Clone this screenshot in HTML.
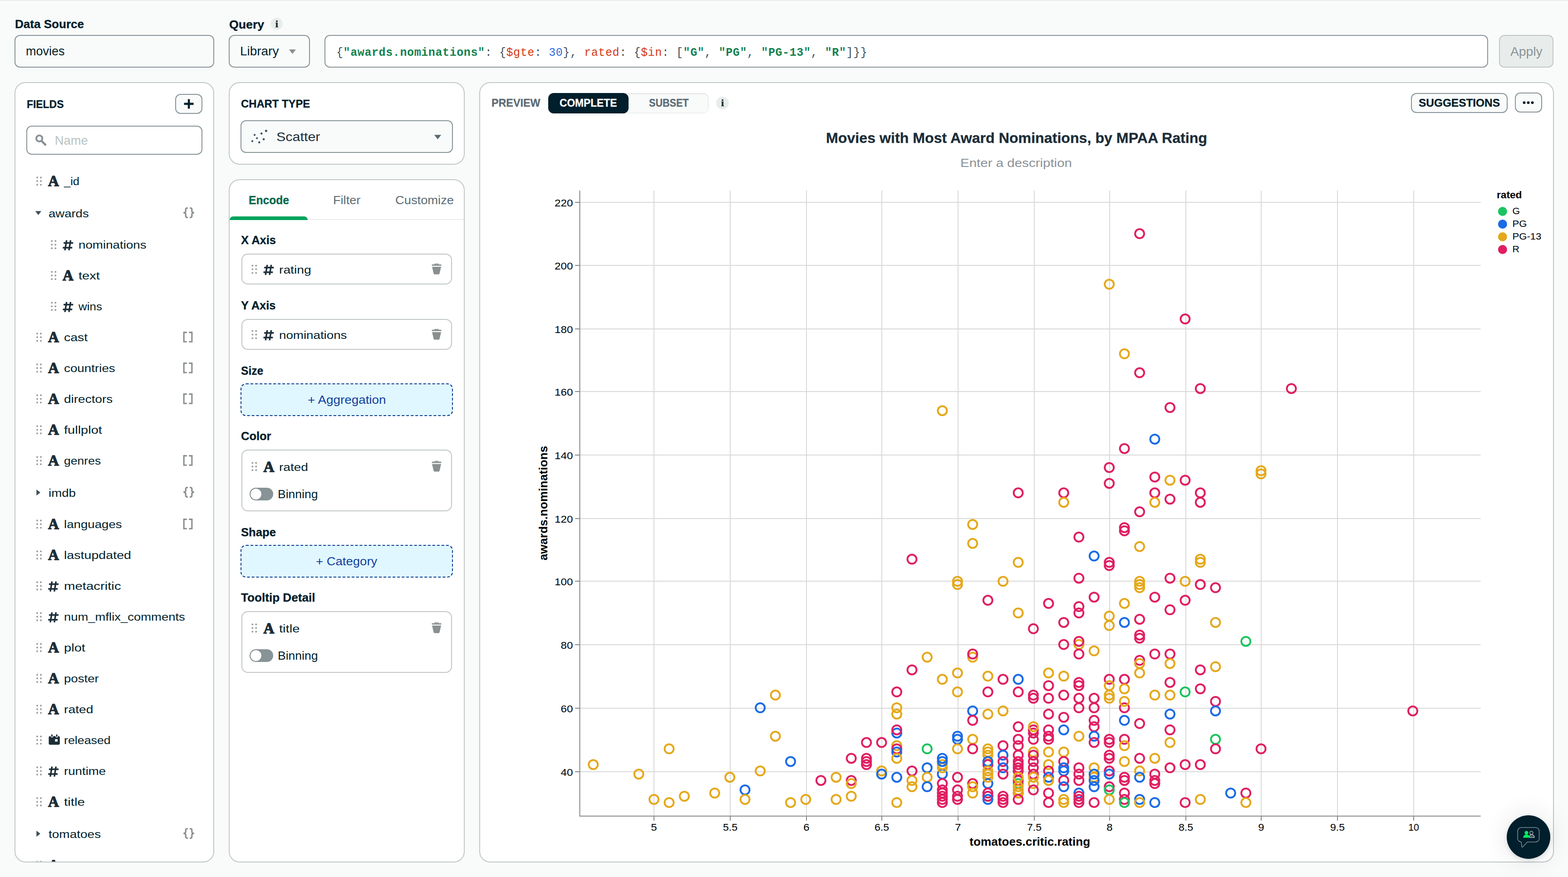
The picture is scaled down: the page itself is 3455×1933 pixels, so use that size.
<!DOCTYPE html>
<html lang="en"><head><meta charset="utf-8"><title>Movies with Most Award Nominations, by MPAA Rating</title>
<style>
html,body{margin:0;padding:0}
body{width:3455px;height:1933px;position:relative;overflow:hidden;background:#F9FBFA;font-family:"Liberation Sans",sans-serif}
.b{position:absolute;box-sizing:border-box}
.t{position:absolute;white-space:nowrap;transform-origin:0 0}
svg.ov{position:absolute;left:0;top:0;pointer-events:none}
</style></head><body>
<div class="b" style="left:0;top:0;width:3455px;height:7px;background:linear-gradient(#E8E9E9 0,#EEEFEF 1.5px,#FCFDFD 3px,#FCFDFC 5px,#F9FBFA 7px)"></div>
<div class="t" style="left:32.6px;top:41.4px;font:700 25.5px/25.5px 'Liberation Sans',sans-serif;color:#001E2B;transform:scaleX(1.0214);-webkit-text-stroke:0.35px;">Data Source</div>
<div class="b " style="left:32px;top:77px;width:440px;height:72px;background:#F9FBFA;border:2px solid #889397;border-radius:12px;box-sizing:border-box;"></div>
<div class="t" style="left:57.0px;top:99.4px;font:400 27.3px/27.3px 'Liberation Sans',sans-serif;color:#001E2B;transform:scaleX(0.9876);">movies</div>
<div class="t" style="left:504.7px;top:41.8px;font:700 25.5px/25.5px 'Liberation Sans',sans-serif;color:#001E2B;transform:scaleX(1.0475);-webkit-text-stroke:0.35px;">Query</div>
<div class="b " style="left:596.3px;top:39.2px;width:27px;height:27px;background:#E8EDEB;border-radius:14px;"></div>
<div class="b " style="left:504px;top:77px;width:179px;height:72px;background:#F9FBFA;border:2px solid #889397;border-radius:12px;box-sizing:border-box;"></div>
<div class="t" style="left:528.9px;top:99.2px;font:400 27.3px/27.3px 'Liberation Sans',sans-serif;color:#001E2B;transform:scaleX(1.0234);">Library</div>
<div class="b " style="left:715px;top:77px;width:2564px;height:72px;background:#fff;border:2px solid #889397;border-radius:12px;box-sizing:border-box;"></div>
<div class="t" style="left:741px;top:103.7px;font:400 25px/25px 'Liberation Mono',monospace;letter-spacing:0.6px;white-space:pre;"><span style="color:#3D4F58;font-weight:400">{</span><span style="color:#12824D;font-weight:700">"awards.nominations"</span><span style="color:#3D4F58;font-weight:400">: {</span><span style="color:#D83713;font-weight:400">$gte</span><span style="color:#3D4F58;font-weight:400">: </span><span style="color:#2D6CDC;font-weight:400">30</span><span style="color:#3D4F58;font-weight:400">}, </span><span style="color:#D83713;font-weight:400">rated</span><span style="color:#3D4F58;font-weight:400">: {</span><span style="color:#D83713;font-weight:400">$in</span><span style="color:#3D4F58;font-weight:400">: [</span><span style="color:#12824D;font-weight:700">"G"</span><span style="color:#3D4F58;font-weight:400">, </span><span style="color:#12824D;font-weight:700">"PG"</span><span style="color:#3D4F58;font-weight:400">, </span><span style="color:#12824D;font-weight:700">"PG-13"</span><span style="color:#3D4F58;font-weight:400">, </span><span style="color:#12824D;font-weight:700">"R"</span><span style="color:#3D4F58;font-weight:400">]}}</span></div>
<div class="b " style="left:3303px;top:77px;width:120px;height:72px;background:#E8EDEB;border:2px solid #C1C7C6;border-radius:12px;box-sizing:border-box;"></div>
<div class="t" style="left:3328.3px;top:100.1px;font:400 27.3px/27.3px 'Liberation Sans',sans-serif;color:#889397;transform:scaleX(1.0353);">Apply</div>
<div class="b " style="left:32px;top:181px;width:440px;height:1720px;background:#fff;border:2px solid #C1C7C6;border-radius:24px;box-sizing:border-box;"></div>
<div class="t" style="left:59.0px;top:218.8px;font:700 23px/23px 'Liberation Sans',sans-serif;color:#001E2B;transform:scaleX(0.9953);-webkit-text-stroke:0.35px;">FIELDS</div>
<div class="b " style="left:386px;top:207px;width:60px;height:44px;background:#F9FBFA;border:2px solid #889397;border-radius:12px;box-sizing:border-box;"></div>
<div class="b " style="left:58px;top:277px;width:388px;height:64px;background:#fff;border:2px solid #889397;border-radius:12px;box-sizing:border-box;"></div>
<div class="t" style="left:120.8px;top:295.8px;font:400 27.3px/27.3px 'Liberation Sans',sans-serif;color:#B8C4C2;">Name</div>
<div class="t" style="left:140.9px;top:388.0px;font:400 24.6px/24.6px 'Liberation Sans',sans-serif;color:#001E2B;transform:scaleX(1.0357);">_id</div>
<div class="t" style="left:106.8px;top:458.8px;font:400 24.6px/24.6px 'Liberation Sans',sans-serif;color:#001E2B;transform:scaleX(1.1185);">awards</div>
<div class="t" style="left:173.1px;top:528.0px;font:400 24.6px/24.6px 'Liberation Sans',sans-serif;color:#001E2B;transform:scaleX(1.1285);">nominations</div>
<div class="t" style="left:173.1px;top:596.0px;font:400 24.6px/24.6px 'Liberation Sans',sans-serif;color:#001E2B;transform:scaleX(1.1828);">text</div>
<div class="t" style="left:173.1px;top:664.0px;font:400 24.6px/24.6px 'Liberation Sans',sans-serif;color:#001E2B;transform:scaleX(1.0546);">wins</div>
<div class="t" style="left:140.9px;top:732.0px;font:400 24.6px/24.6px 'Liberation Sans',sans-serif;color:#001E2B;transform:scaleX(1.1592);">cast</div>
<div class="t" style="left:140.9px;top:800.0px;font:400 24.6px/24.6px 'Liberation Sans',sans-serif;color:#001E2B;transform:scaleX(1.1300);">countries</div>
<div class="t" style="left:140.9px;top:868.0px;font:400 24.6px/24.6px 'Liberation Sans',sans-serif;color:#001E2B;transform:scaleX(1.1385);">directors</div>
<div class="t" style="left:140.9px;top:936.0px;font:400 24.6px/24.6px 'Liberation Sans',sans-serif;color:#001E2B;transform:scaleX(1.1798);">fullplot</div>
<div class="t" style="left:140.9px;top:1004.0px;font:400 24.6px/24.6px 'Liberation Sans',sans-serif;color:#001E2B;transform:scaleX(1.0795);">genres</div>
<div class="t" style="left:106.8px;top:1074.8px;font:400 24.6px/24.6px 'Liberation Sans',sans-serif;color:#001E2B;transform:scaleX(1.1252);">imdb</div>
<div class="t" style="left:140.9px;top:1144.0px;font:400 24.6px/24.6px 'Liberation Sans',sans-serif;color:#001E2B;transform:scaleX(1.1247);">languages</div>
<div class="t" style="left:140.9px;top:1212.0px;font:400 24.6px/24.6px 'Liberation Sans',sans-serif;color:#001E2B;transform:scaleX(1.1635);">lastupdated</div>
<div class="t" style="left:140.9px;top:1280.0px;font:400 24.6px/24.6px 'Liberation Sans',sans-serif;color:#001E2B;transform:scaleX(1.1934);">metacritic</div>
<div class="t" style="left:140.9px;top:1348.0px;font:400 24.6px/24.6px 'Liberation Sans',sans-serif;color:#001E2B;transform:scaleX(1.1152);">num_mflix_comments</div>
<div class="t" style="left:140.9px;top:1416.0px;font:400 24.6px/24.6px 'Liberation Sans',sans-serif;color:#001E2B;transform:scaleX(1.1824);">plot</div>
<div class="t" style="left:140.9px;top:1484.0px;font:400 24.6px/24.6px 'Liberation Sans',sans-serif;color:#001E2B;transform:scaleX(1.1233);">poster</div>
<div class="t" style="left:140.9px;top:1552.0px;font:400 24.6px/24.6px 'Liberation Sans',sans-serif;color:#001E2B;transform:scaleX(1.1503);">rated</div>
<div class="t" style="left:140.9px;top:1620.0px;font:400 24.6px/24.6px 'Liberation Sans',sans-serif;color:#001E2B;transform:scaleX(1.0883);">released</div>
<div class="t" style="left:140.9px;top:1688.0px;font:400 24.6px/24.6px 'Liberation Sans',sans-serif;color:#001E2B;transform:scaleX(1.1240);">runtime</div>
<div class="t" style="left:140.9px;top:1756.0px;font:400 24.6px/24.6px 'Liberation Sans',sans-serif;color:#001E2B;transform:scaleX(1.2016);">title</div>
<div class="t" style="left:106.8px;top:1826.8px;font:400 24.6px/24.6px 'Liberation Sans',sans-serif;color:#001E2B;transform:scaleX(1.1385);">tomatoes</div>
<div class="b " style="left:504px;top:181px;width:520px;height:182px;background:#fff;border:2px solid #C1C7C6;border-radius:24px;box-sizing:border-box;"></div>
<div class="t" style="left:531.0px;top:217.5px;font:700 23px/23px 'Liberation Sans',sans-serif;color:#001E2B;transform:scaleX(1.0357);-webkit-text-stroke:0.35px;">CHART TYPE</div>
<div class="b " style="left:530px;top:265px;width:468px;height:72px;background:#F9FBFA;border:2px solid #889397;border-radius:12px;box-sizing:border-box;"></div>
<div class="t" style="left:608.9px;top:287.9px;font:400 27.3px/27.3px 'Liberation Sans',sans-serif;color:#1C2D38;transform:scaleX(1.1158);">Scatter</div>
<div class="b " style="left:504px;top:395px;width:520px;height:1506px;background:#fff;border:2px solid #C1C7C6;border-radius:24px;box-sizing:border-box;overflow:hidden;"><div class="b" style="left:0;top:86px;width:516px;height:2px;background:#E8EDEB"></div><div class="b" style="left:0;top:80px;width:172px;height:8px;background:#00A35C;border-radius:8px 8px 0 0"></div></div>
<div class="t" style="left:547.5px;top:429.4px;font:700 25.8px/25.8px 'Liberation Sans',sans-serif;color:#00684A;transform:scaleX(0.9551);-webkit-text-stroke:0.35px;">Encode</div>
<div class="t" style="left:734.2px;top:429.4px;font:400 25.8px/25.8px 'Liberation Sans',sans-serif;color:#5C6C75;transform:scaleX(1.0517);">Filter</div>
<div class="t" style="left:871.1px;top:429.4px;font:400 25.8px/25.8px 'Liberation Sans',sans-serif;color:#5C6C75;transform:scaleX(1.0585);">Customize</div>
<div class="t" style="left:530.6px;top:517.2px;font:700 25.8px/25.8px 'Liberation Sans',sans-serif;color:#001E2B;transform:scaleX(0.9882);-webkit-text-stroke:0.35px;">X Axis</div>
<div class="b " style="left:532px;top:559px;width:464px;height:68px;background:#fff;border:2px solid #C1C7C6;border-radius:14px;box-sizing:border-box;"></div>
<div class="t" style="left:615.2px;top:582.8px;font:400 24.6px/24.6px 'Liberation Sans',sans-serif;color:#001E2B;transform:scaleX(1.1473);">rating</div>
<div class="t" style="left:530.6px;top:661.2px;font:700 25.8px/25.8px 'Liberation Sans',sans-serif;color:#001E2B;transform:scaleX(0.9877);-webkit-text-stroke:0.35px;">Y Axis</div>
<div class="b " style="left:532px;top:703px;width:464px;height:68px;background:#fff;border:2px solid #C1C7C6;border-radius:14px;box-sizing:border-box;"></div>
<div class="t" style="left:615.2px;top:726.8px;font:400 24.6px/24.6px 'Liberation Sans',sans-serif;color:#001E2B;transform:scaleX(1.1270);">nominations</div>
<div class="t" style="left:530.6px;top:805.0px;font:700 25.8px/25.8px 'Liberation Sans',sans-serif;color:#001E2B;transform:scaleX(0.9530);-webkit-text-stroke:0.35px;">Size</div>
<div class="b " style="left:530px;top:845px;width:468px;height:72px;background:#E1F7FF;border:2px solid #083C90;border-radius:12px;box-sizing:border-box;border-style:dashed;"></div>
<div class="t" style="left:677.8px;top:869.0px;font:400 25.5px/25.5px 'Liberation Sans',sans-serif;color:#10419C;transform:scaleX(1.0911);">+ Aggregation</div>
<div class="t" style="left:530.6px;top:949.2px;font:700 25.8px/25.8px 'Liberation Sans',sans-serif;color:#001E2B;transform:scaleX(0.9872);-webkit-text-stroke:0.35px;">Color</div>
<div class="b " style="left:532px;top:991px;width:464px;height:136px;background:#fff;border:2px solid #C1C7C6;border-radius:14px;box-sizing:border-box;"></div>
<div class="t" style="left:615.2px;top:1017.6px;font:400 24.6px/24.6px 'Liberation Sans',sans-serif;color:#001E2B;transform:scaleX(1.1378);">rated</div>
<div class="b " style="left:550px;top:1075px;width:52px;height:28px;background:#889397;border-radius:14px;"></div>
<div class="b " style="left:552px;top:1077px;width:24px;height:24px;background:#fff;border-radius:12px;box-shadow:0 0 2px rgba(0,30,43,.3);"></div>
<div class="t" style="left:611.8px;top:1076.9px;font:400 25.5px/25.5px 'Liberation Sans',sans-serif;color:#001E2B;transform:scaleX(1.0391);">Binning</div>
<div class="t" style="left:530.6px;top:1161.2px;font:700 25.8px/25.8px 'Liberation Sans',sans-serif;color:#001E2B;transform:scaleX(0.9945);-webkit-text-stroke:0.35px;">Shape</div>
<div class="b " style="left:530px;top:1201px;width:468px;height:72px;background:#E1F7FF;border:2px solid #083C90;border-radius:12px;box-sizing:border-box;border-style:dashed;"></div>
<div class="t" style="left:696.4px;top:1225.0px;font:400 25.5px/25.5px 'Liberation Sans',sans-serif;color:#10419C;transform:scaleX(1.0785);">+ Category</div>
<div class="t" style="left:530.6px;top:1304.9px;font:700 25.8px/25.8px 'Liberation Sans',sans-serif;color:#001E2B;transform:scaleX(1.0125);-webkit-text-stroke:0.35px;">Tooltip Detail</div>
<div class="b " style="left:532px;top:1347px;width:464px;height:136px;background:#fff;border:2px solid #C1C7C6;border-radius:14px;box-sizing:border-box;"></div>
<div class="t" style="left:615.2px;top:1373.6px;font:400 24.6px/24.6px 'Liberation Sans',sans-serif;color:#001E2B;transform:scaleX(1.1886);">title</div>
<div class="b " style="left:550px;top:1431px;width:52px;height:28px;background:#889397;border-radius:14px;"></div>
<div class="b " style="left:552px;top:1433px;width:24px;height:24px;background:#fff;border-radius:12px;box-shadow:0 0 2px rgba(0,30,43,.3);"></div>
<div class="t" style="left:611.8px;top:1433.0px;font:400 25.5px/25.5px 'Liberation Sans',sans-serif;color:#001E2B;transform:scaleX(1.0391);">Binning</div>
<div class="b " style="left:1056px;top:181px;width:2368px;height:1720px;background:#fff;border:2px solid #C1C7C6;border-radius:24px;box-sizing:border-box;"></div>
<div class="t" style="left:1083.3px;top:215.9px;font:700 23px/23px 'Liberation Sans',sans-serif;color:#5C6C75;transform:scaleX(1.0125);-webkit-text-stroke:0.35px;">PREVIEW</div>
<div class="b " style="left:1208px;top:205px;width:354px;height:45px;background:#F9FBFA;border:1px solid #E8EDEB;border-radius:12px;box-sizing:border-box;box-shadow:inset 0 1px 3px rgba(0,30,43,.12);"></div>
<div class="b " style="left:1208px;top:205px;width:177px;height:44.5px;background:#001E2B;border-radius:12px;"></div>
<div class="t" style="left:1232.8px;top:215.9px;font:700 23px/23px 'Liberation Sans',sans-serif;color:#fff;transform:scaleX(0.9884);-webkit-text-stroke:0.35px;">COMPLETE</div>
<div class="t" style="left:1430.2px;top:215.9px;font:700 23px/23px 'Liberation Sans',sans-serif;color:#5C6C75;transform:scaleX(0.9379);-webkit-text-stroke:0.35px;">SUBSET</div>
<div class="b " style="left:1578px;top:213px;width:28px;height:28px;background:#E8EDEB;border-radius:14px;"></div>
<div class="b " style="left:3109px;top:205px;width:213px;height:44px;background:#F9FBFA;border:2px solid #889397;border-radius:12px;box-sizing:border-box;"></div>
<div class="t" style="left:3125.7px;top:215.5px;font:700 23px/23px 'Liberation Sans',sans-serif;color:#001E2B;transform:scaleX(1.0611);-webkit-text-stroke:0.35px;">SUGGESTIONS</div>
<div class="b " style="left:3338px;top:204px;width:60px;height:44px;background:#F9FBFA;border:2px solid #889397;border-radius:12px;box-sizing:border-box;"></div>
<div class="t" style="left:1820.0px;top:289.1px;font:700 31.5px/31.5px 'Liberation Sans',sans-serif;color:#1C2D38;transform:scaleX(1.0212);-webkit-text-stroke:0.35px;">Movies with Most Award Nominations, by MPAA Rating</div>
<div class="t" style="left:2116.3px;top:346.3px;font:400 26px/26px 'Liberation Sans',sans-serif;color:#8A9196;transform:scaleX(1.1347);">Enter a description</div>
<div class="b " style="left:3320px;top:1797px;width:96px;height:96px;background:#001E2B;border-radius:48px;box-shadow:0 0 50px 10px rgba(0,30,43,.07),0 3px 10px rgba(0,30,43,.14);"></div>
<svg class="ov" width="3455" height="1933" viewBox="0 0 3455 1933">
<defs><clipPath id="fclip"><rect x="34" y="183" width="436" height="1716"/></clipPath></defs>
<text x="609.8" y="60.2" text-anchor="middle" font-family="Liberation Serif,serif" font-weight="700" font-size="22" fill="#1C2D38" stroke="#1C2D38" stroke-width="0.7">i</text>
<path d="M636.8 108.9H652.0L644.4 119.1Z" fill="#8A9090"/>
<path d="M405.6 228.9h21M416.1 218.4v21" stroke="#001E2B" stroke-width="4.6" fill="none"/>
<circle cx="86.6" cy="305.2" r="6.6" fill="none" stroke="#889397" stroke-width="4"/><path d="M91.6 310.6L100 319" stroke="#889397" stroke-width="4.6" stroke-linecap="round"/>
<circle cx="82.0" cy="391.2" r="1.95" fill="#989D9C"/>
<circle cx="82.0" cy="399.2" r="1.95" fill="#989D9C"/>
<circle cx="82.0" cy="407.2" r="1.95" fill="#989D9C"/>
<circle cx="90.0" cy="391.2" r="1.95" fill="#989D9C"/>
<circle cx="90.0" cy="399.2" r="1.95" fill="#989D9C"/>
<circle cx="90.0" cy="407.2" r="1.95" fill="#989D9C"/>
<text x="117.8" y="410.3" text-anchor="middle" font-family="Liberation Serif,serif" font-weight="700" font-size="33" fill="#1C2D38" stroke="#1C2D38" stroke-width="1.5" stroke-linejoin="miter">A</text>
<path d="M77.8 465.3H91.0L84.4 473.9Z" fill="#3D4F58"/>
<g fill="none" stroke="#8A9090" stroke-width="3.2" stroke-linejoin="round" stroke-linecap="butt"><path d="M413.9 458.5h-1.5q-3.2 0 -3.2 3.2v3.4q0 3.4 -3.8 3.8q3.8 0.4 3.8 3.8v3.4q0 3.2 3.2 3.2h1.5"/><path d="M418.1 458.5h1.5q3.2 0 3.2 3.2v3.4q0 3.4 3.8 3.8q-3.8 0.4 -3.8 3.8v3.4q0 3.2 -3.2 3.2h-1.5"/></g>
<circle cx="114.2" cy="531.2" r="1.95" fill="#989D9C"/>
<circle cx="114.2" cy="539.2" r="1.95" fill="#989D9C"/>
<circle cx="114.2" cy="547.2" r="1.95" fill="#989D9C"/>
<circle cx="122.2" cy="531.2" r="1.95" fill="#989D9C"/>
<circle cx="122.2" cy="539.2" r="1.95" fill="#989D9C"/>
<circle cx="122.2" cy="547.2" r="1.95" fill="#989D9C"/>
<g stroke="#1C2D38" stroke-width="3.5" fill="none" stroke-linecap="butt"><path d="M146.8 529.6L143.0 551.8M155.6 529.6L151.9 551.8"/><path d="M140.1 535.5H161.3M138.4 545.9H159.2"/></g>
<circle cx="114.2" cy="599.2" r="1.95" fill="#989D9C"/>
<circle cx="114.2" cy="607.2" r="1.95" fill="#989D9C"/>
<circle cx="114.2" cy="615.2" r="1.95" fill="#989D9C"/>
<circle cx="122.2" cy="599.2" r="1.95" fill="#989D9C"/>
<circle cx="122.2" cy="607.2" r="1.95" fill="#989D9C"/>
<circle cx="122.2" cy="615.2" r="1.95" fill="#989D9C"/>
<text x="150.0" y="618.3" text-anchor="middle" font-family="Liberation Serif,serif" font-weight="700" font-size="33" fill="#1C2D38" stroke="#1C2D38" stroke-width="1.5" stroke-linejoin="miter">A</text>
<circle cx="114.2" cy="667.2" r="1.95" fill="#989D9C"/>
<circle cx="114.2" cy="675.2" r="1.95" fill="#989D9C"/>
<circle cx="114.2" cy="683.2" r="1.95" fill="#989D9C"/>
<circle cx="122.2" cy="667.2" r="1.95" fill="#989D9C"/>
<circle cx="122.2" cy="675.2" r="1.95" fill="#989D9C"/>
<circle cx="122.2" cy="683.2" r="1.95" fill="#989D9C"/>
<g stroke="#1C2D38" stroke-width="3.5" fill="none" stroke-linecap="butt"><path d="M146.8 665.6L143.0 687.8M155.6 665.6L151.9 687.8"/><path d="M140.1 671.5H161.3M138.4 681.9H159.2"/></g>
<circle cx="82.0" cy="735.2" r="1.95" fill="#989D9C"/>
<circle cx="82.0" cy="743.2" r="1.95" fill="#989D9C"/>
<circle cx="82.0" cy="751.2" r="1.95" fill="#989D9C"/>
<circle cx="90.0" cy="735.2" r="1.95" fill="#989D9C"/>
<circle cx="90.0" cy="743.2" r="1.95" fill="#989D9C"/>
<circle cx="90.0" cy="751.2" r="1.95" fill="#989D9C"/>
<text x="117.8" y="754.3" text-anchor="middle" font-family="Liberation Serif,serif" font-weight="700" font-size="33" fill="#1C2D38" stroke="#1C2D38" stroke-width="1.5" stroke-linejoin="miter">A</text>
<g fill="none" stroke="#8A9090" stroke-width="3.1" stroke-linejoin="miter"><path d="M411.8 732.6h-6.65v20.7h6.65"/><path d="M416.2 732.6h6.65v20.7h-6.65"/></g>
<circle cx="82.0" cy="803.2" r="1.95" fill="#989D9C"/>
<circle cx="82.0" cy="811.2" r="1.95" fill="#989D9C"/>
<circle cx="82.0" cy="819.2" r="1.95" fill="#989D9C"/>
<circle cx="90.0" cy="803.2" r="1.95" fill="#989D9C"/>
<circle cx="90.0" cy="811.2" r="1.95" fill="#989D9C"/>
<circle cx="90.0" cy="819.2" r="1.95" fill="#989D9C"/>
<text x="117.8" y="822.3" text-anchor="middle" font-family="Liberation Serif,serif" font-weight="700" font-size="33" fill="#1C2D38" stroke="#1C2D38" stroke-width="1.5" stroke-linejoin="miter">A</text>
<g fill="none" stroke="#8A9090" stroke-width="3.1" stroke-linejoin="miter"><path d="M411.8 800.6h-6.65v20.7h6.65"/><path d="M416.2 800.6h6.65v20.7h-6.65"/></g>
<circle cx="82.0" cy="871.2" r="1.95" fill="#989D9C"/>
<circle cx="82.0" cy="879.2" r="1.95" fill="#989D9C"/>
<circle cx="82.0" cy="887.2" r="1.95" fill="#989D9C"/>
<circle cx="90.0" cy="871.2" r="1.95" fill="#989D9C"/>
<circle cx="90.0" cy="879.2" r="1.95" fill="#989D9C"/>
<circle cx="90.0" cy="887.2" r="1.95" fill="#989D9C"/>
<text x="117.8" y="890.3" text-anchor="middle" font-family="Liberation Serif,serif" font-weight="700" font-size="33" fill="#1C2D38" stroke="#1C2D38" stroke-width="1.5" stroke-linejoin="miter">A</text>
<g fill="none" stroke="#8A9090" stroke-width="3.1" stroke-linejoin="miter"><path d="M411.8 868.6h-6.65v20.7h6.65"/><path d="M416.2 868.6h6.65v20.7h-6.65"/></g>
<circle cx="82.0" cy="939.2" r="1.95" fill="#989D9C"/>
<circle cx="82.0" cy="947.2" r="1.95" fill="#989D9C"/>
<circle cx="82.0" cy="955.2" r="1.95" fill="#989D9C"/>
<circle cx="90.0" cy="939.2" r="1.95" fill="#989D9C"/>
<circle cx="90.0" cy="947.2" r="1.95" fill="#989D9C"/>
<circle cx="90.0" cy="955.2" r="1.95" fill="#989D9C"/>
<text x="117.8" y="958.3" text-anchor="middle" font-family="Liberation Serif,serif" font-weight="700" font-size="33" fill="#1C2D38" stroke="#1C2D38" stroke-width="1.5" stroke-linejoin="miter">A</text>
<circle cx="82.0" cy="1007.2" r="1.95" fill="#989D9C"/>
<circle cx="82.0" cy="1015.2" r="1.95" fill="#989D9C"/>
<circle cx="82.0" cy="1023.2" r="1.95" fill="#989D9C"/>
<circle cx="90.0" cy="1007.2" r="1.95" fill="#989D9C"/>
<circle cx="90.0" cy="1015.2" r="1.95" fill="#989D9C"/>
<circle cx="90.0" cy="1023.2" r="1.95" fill="#989D9C"/>
<text x="117.8" y="1026.3" text-anchor="middle" font-family="Liberation Serif,serif" font-weight="700" font-size="33" fill="#1C2D38" stroke="#1C2D38" stroke-width="1.5" stroke-linejoin="miter">A</text>
<g fill="none" stroke="#8A9090" stroke-width="3.1" stroke-linejoin="miter"><path d="M411.8 1004.6h-6.65v20.7h6.65"/><path d="M416.2 1004.6h6.65v20.7h-6.65"/></g>
<path d="M80.3 1079.0V1092.2L88.9 1085.6Z" fill="#3D4F58"/>
<g fill="none" stroke="#8A9090" stroke-width="3.2" stroke-linejoin="round" stroke-linecap="butt"><path d="M413.9 1074.5h-1.5q-3.2 0 -3.2 3.2v3.4q0 3.4 -3.8 3.8q3.8 0.4 3.8 3.8v3.4q0 3.2 3.2 3.2h1.5"/><path d="M418.1 1074.5h1.5q3.2 0 3.2 3.2v3.4q0 3.4 3.8 3.8q-3.8 0.4 -3.8 3.8v3.4q0 3.2 -3.2 3.2h-1.5"/></g>
<circle cx="82.0" cy="1147.2" r="1.95" fill="#989D9C"/>
<circle cx="82.0" cy="1155.2" r="1.95" fill="#989D9C"/>
<circle cx="82.0" cy="1163.2" r="1.95" fill="#989D9C"/>
<circle cx="90.0" cy="1147.2" r="1.95" fill="#989D9C"/>
<circle cx="90.0" cy="1155.2" r="1.95" fill="#989D9C"/>
<circle cx="90.0" cy="1163.2" r="1.95" fill="#989D9C"/>
<text x="117.8" y="1166.3" text-anchor="middle" font-family="Liberation Serif,serif" font-weight="700" font-size="33" fill="#1C2D38" stroke="#1C2D38" stroke-width="1.5" stroke-linejoin="miter">A</text>
<g fill="none" stroke="#8A9090" stroke-width="3.1" stroke-linejoin="miter"><path d="M411.8 1144.6h-6.65v20.7h6.65"/><path d="M416.2 1144.6h6.65v20.7h-6.65"/></g>
<circle cx="82.0" cy="1215.2" r="1.95" fill="#989D9C"/>
<circle cx="82.0" cy="1223.2" r="1.95" fill="#989D9C"/>
<circle cx="82.0" cy="1231.2" r="1.95" fill="#989D9C"/>
<circle cx="90.0" cy="1215.2" r="1.95" fill="#989D9C"/>
<circle cx="90.0" cy="1223.2" r="1.95" fill="#989D9C"/>
<circle cx="90.0" cy="1231.2" r="1.95" fill="#989D9C"/>
<text x="117.8" y="1234.3" text-anchor="middle" font-family="Liberation Serif,serif" font-weight="700" font-size="33" fill="#1C2D38" stroke="#1C2D38" stroke-width="1.5" stroke-linejoin="miter">A</text>
<circle cx="82.0" cy="1283.2" r="1.95" fill="#989D9C"/>
<circle cx="82.0" cy="1291.2" r="1.95" fill="#989D9C"/>
<circle cx="82.0" cy="1299.2" r="1.95" fill="#989D9C"/>
<circle cx="90.0" cy="1283.2" r="1.95" fill="#989D9C"/>
<circle cx="90.0" cy="1291.2" r="1.95" fill="#989D9C"/>
<circle cx="90.0" cy="1299.2" r="1.95" fill="#989D9C"/>
<g stroke="#1C2D38" stroke-width="3.5" fill="none" stroke-linecap="butt"><path d="M114.6 1281.6L110.8 1303.8M123.4 1281.6L119.7 1303.8"/><path d="M107.9 1287.5H129.1M106.2 1297.9H127.0"/></g>
<circle cx="82.0" cy="1351.2" r="1.95" fill="#989D9C"/>
<circle cx="82.0" cy="1359.2" r="1.95" fill="#989D9C"/>
<circle cx="82.0" cy="1367.2" r="1.95" fill="#989D9C"/>
<circle cx="90.0" cy="1351.2" r="1.95" fill="#989D9C"/>
<circle cx="90.0" cy="1359.2" r="1.95" fill="#989D9C"/>
<circle cx="90.0" cy="1367.2" r="1.95" fill="#989D9C"/>
<g stroke="#1C2D38" stroke-width="3.5" fill="none" stroke-linecap="butt"><path d="M114.6 1349.6L110.8 1371.8M123.4 1349.6L119.7 1371.8"/><path d="M107.9 1355.5H129.1M106.2 1365.9H127.0"/></g>
<circle cx="82.0" cy="1419.2" r="1.95" fill="#989D9C"/>
<circle cx="82.0" cy="1427.2" r="1.95" fill="#989D9C"/>
<circle cx="82.0" cy="1435.2" r="1.95" fill="#989D9C"/>
<circle cx="90.0" cy="1419.2" r="1.95" fill="#989D9C"/>
<circle cx="90.0" cy="1427.2" r="1.95" fill="#989D9C"/>
<circle cx="90.0" cy="1435.2" r="1.95" fill="#989D9C"/>
<text x="117.8" y="1438.3" text-anchor="middle" font-family="Liberation Serif,serif" font-weight="700" font-size="33" fill="#1C2D38" stroke="#1C2D38" stroke-width="1.5" stroke-linejoin="miter">A</text>
<circle cx="82.0" cy="1487.2" r="1.95" fill="#989D9C"/>
<circle cx="82.0" cy="1495.2" r="1.95" fill="#989D9C"/>
<circle cx="82.0" cy="1503.2" r="1.95" fill="#989D9C"/>
<circle cx="90.0" cy="1487.2" r="1.95" fill="#989D9C"/>
<circle cx="90.0" cy="1495.2" r="1.95" fill="#989D9C"/>
<circle cx="90.0" cy="1503.2" r="1.95" fill="#989D9C"/>
<text x="117.8" y="1506.3" text-anchor="middle" font-family="Liberation Serif,serif" font-weight="700" font-size="33" fill="#1C2D38" stroke="#1C2D38" stroke-width="1.5" stroke-linejoin="miter">A</text>
<circle cx="82.0" cy="1555.2" r="1.95" fill="#989D9C"/>
<circle cx="82.0" cy="1563.2" r="1.95" fill="#989D9C"/>
<circle cx="82.0" cy="1571.2" r="1.95" fill="#989D9C"/>
<circle cx="90.0" cy="1555.2" r="1.95" fill="#989D9C"/>
<circle cx="90.0" cy="1563.2" r="1.95" fill="#989D9C"/>
<circle cx="90.0" cy="1571.2" r="1.95" fill="#989D9C"/>
<text x="117.8" y="1574.3" text-anchor="middle" font-family="Liberation Serif,serif" font-weight="700" font-size="33" fill="#1C2D38" stroke="#1C2D38" stroke-width="1.5" stroke-linejoin="miter">A</text>
<circle cx="82.0" cy="1623.2" r="1.95" fill="#989D9C"/>
<circle cx="82.0" cy="1631.2" r="1.95" fill="#989D9C"/>
<circle cx="82.0" cy="1639.2" r="1.95" fill="#989D9C"/>
<circle cx="90.0" cy="1623.2" r="1.95" fill="#989D9C"/>
<circle cx="90.0" cy="1631.2" r="1.95" fill="#989D9C"/>
<circle cx="90.0" cy="1639.2" r="1.95" fill="#989D9C"/>
<rect x="107.4" y="1622.4" width="24.4" height="19" rx="3.2" fill="#1C2D38"/><rect x="121.3" y="1629.1" width="5.6" height="5.4" fill="#fff"/><g fill="#1C2D38" stroke="#fff" stroke-width="2.6" paint-order="stroke"><rect x="112.9" y="1618.5" width="3" height="5.6" rx="1.5"/><rect x="123.6" y="1618.5" width="3" height="5.6" rx="1.5"/></g>
<circle cx="82.0" cy="1691.2" r="1.95" fill="#989D9C"/>
<circle cx="82.0" cy="1699.2" r="1.95" fill="#989D9C"/>
<circle cx="82.0" cy="1707.2" r="1.95" fill="#989D9C"/>
<circle cx="90.0" cy="1691.2" r="1.95" fill="#989D9C"/>
<circle cx="90.0" cy="1699.2" r="1.95" fill="#989D9C"/>
<circle cx="90.0" cy="1707.2" r="1.95" fill="#989D9C"/>
<g stroke="#1C2D38" stroke-width="3.5" fill="none" stroke-linecap="butt"><path d="M114.6 1689.6L110.8 1711.8M123.4 1689.6L119.7 1711.8"/><path d="M107.9 1695.5H129.1M106.2 1705.9H127.0"/></g>
<circle cx="82.0" cy="1759.2" r="1.95" fill="#989D9C"/>
<circle cx="82.0" cy="1767.2" r="1.95" fill="#989D9C"/>
<circle cx="82.0" cy="1775.2" r="1.95" fill="#989D9C"/>
<circle cx="90.0" cy="1759.2" r="1.95" fill="#989D9C"/>
<circle cx="90.0" cy="1767.2" r="1.95" fill="#989D9C"/>
<circle cx="90.0" cy="1775.2" r="1.95" fill="#989D9C"/>
<text x="117.8" y="1778.3" text-anchor="middle" font-family="Liberation Serif,serif" font-weight="700" font-size="33" fill="#1C2D38" stroke="#1C2D38" stroke-width="1.5" stroke-linejoin="miter">A</text>
<path d="M80.3 1831.0V1844.2L88.9 1837.6Z" fill="#3D4F58"/>
<g fill="none" stroke="#8A9090" stroke-width="3.2" stroke-linejoin="round" stroke-linecap="butt"><path d="M413.9 1826.5h-1.5q-3.2 0 -3.2 3.2v3.4q0 3.4 -3.8 3.8q3.8 0.4 3.8 3.8v3.4q0 3.2 3.2 3.2h1.5"/><path d="M418.1 1826.5h1.5q3.2 0 3.2 3.2v3.4q0 3.4 3.8 3.8q-3.8 0.4 -3.8 3.8v3.4q0 3.2 -3.2 3.2h-1.5"/></g>
<g clip-path="url(#fclip)">
<circle cx="82.0" cy="1899.2" r="1.95" fill="#989D9C"/>
<circle cx="82.0" cy="1907.2" r="1.95" fill="#989D9C"/>
<circle cx="82.0" cy="1915.2" r="1.95" fill="#989D9C"/>
<circle cx="90.0" cy="1899.2" r="1.95" fill="#989D9C"/>
<circle cx="90.0" cy="1907.2" r="1.95" fill="#989D9C"/>
<circle cx="90.0" cy="1915.2" r="1.95" fill="#989D9C"/>
<text x="117.8" y="1918.3" text-anchor="middle" font-family="Liberation Serif,serif" font-weight="700" font-size="33" fill="#1C2D38" stroke="#1C2D38" stroke-width="1.5" stroke-linejoin="miter">A</text>
</g>
<circle cx="586.3" cy="288.4" r="2.5" fill="#3D4F58"/>
<circle cx="576.2" cy="294.3" r="2.3" fill="#3D4F58"/>
<circle cx="561" cy="297.4" r="2.1" fill="#3D4F58"/>
<circle cx="566.2" cy="304.6" r="2.1" fill="#3D4F58"/>
<circle cx="581.1" cy="306.9" r="2.3" fill="#3D4F58"/>
<circle cx="555.9" cy="311.2" r="2.1" fill="#3D4F58"/>
<circle cx="571.2" cy="313.7" r="2.3" fill="#3D4F58"/>
<path d="M956.7 297.3H972.3L964.5 307.1Z" fill="#5C6C75"/>
<circle cx="556.3" cy="585.4" r="1.95" fill="#989D9C"/>
<circle cx="556.3" cy="593.4" r="1.95" fill="#989D9C"/>
<circle cx="556.3" cy="601.4" r="1.95" fill="#989D9C"/>
<circle cx="564.3" cy="585.4" r="1.95" fill="#989D9C"/>
<circle cx="564.3" cy="593.4" r="1.95" fill="#989D9C"/>
<circle cx="564.3" cy="601.4" r="1.95" fill="#989D9C"/>
<g stroke="#1C2D38" stroke-width="3.5" fill="none" stroke-linecap="butt"><path d="M588.9 583.8L585.1 606.0M597.7 583.8L594.0 606.0"/><path d="M582.2 589.7H603.4M580.5 600.1H601.3"/></g>
<g fill="#8A9090"><path d="M951.6 582.8h20.8v3h-20.8z"/><path d="M957.1 582.8v-0.9q0 -1 1 -1h7.7q1 0 1 1v0.9z"/><path d="M952.0 587.9h20l-3.5 15q-0.45 1.8 -2.3 1.8h-8.4q-1.85 0 -2.3 -1.8z"/></g>
<circle cx="556.3" cy="729.4" r="1.95" fill="#989D9C"/>
<circle cx="556.3" cy="737.4" r="1.95" fill="#989D9C"/>
<circle cx="556.3" cy="745.4" r="1.95" fill="#989D9C"/>
<circle cx="564.3" cy="729.4" r="1.95" fill="#989D9C"/>
<circle cx="564.3" cy="737.4" r="1.95" fill="#989D9C"/>
<circle cx="564.3" cy="745.4" r="1.95" fill="#989D9C"/>
<g stroke="#1C2D38" stroke-width="3.5" fill="none" stroke-linecap="butt"><path d="M588.9 727.8L585.1 750.0M597.7 727.8L594.0 750.0"/><path d="M582.2 733.7H603.4M580.5 744.1H601.3"/></g>
<g fill="#8A9090"><path d="M951.6 726.8h20.8v3h-20.8z"/><path d="M957.1 726.8v-0.9q0 -1 1 -1h7.7q1 0 1 1v0.9z"/><path d="M952.0 731.9h20l-3.5 15q-0.45 1.8 -2.3 1.8h-8.4q-1.85 0 -2.3 -1.8z"/></g>
<circle cx="556.3" cy="1020.2" r="1.95" fill="#989D9C"/>
<circle cx="556.3" cy="1028.2" r="1.95" fill="#989D9C"/>
<circle cx="556.3" cy="1036.2" r="1.95" fill="#989D9C"/>
<circle cx="564.3" cy="1020.2" r="1.95" fill="#989D9C"/>
<circle cx="564.3" cy="1028.2" r="1.95" fill="#989D9C"/>
<circle cx="564.3" cy="1036.2" r="1.95" fill="#989D9C"/>
<text x="592.4" y="1039.7" text-anchor="middle" font-family="Liberation Serif,serif" font-weight="700" font-size="33" fill="#1C2D38" stroke="#1C2D38" stroke-width="1.5" stroke-linejoin="miter">A</text>
<g fill="#8A9090"><path d="M951.6 1017.6h20.8v3h-20.8z"/><path d="M957.1 1017.6v-0.9q0 -1 1 -1h7.7q1 0 1 1v0.9z"/><path d="M952.0 1022.7h20l-3.5 15q-0.45 1.8 -2.3 1.8h-8.4q-1.85 0 -2.3 -1.8z"/></g>
<circle cx="556.3" cy="1376.2" r="1.95" fill="#989D9C"/>
<circle cx="556.3" cy="1384.2" r="1.95" fill="#989D9C"/>
<circle cx="556.3" cy="1392.2" r="1.95" fill="#989D9C"/>
<circle cx="564.3" cy="1376.2" r="1.95" fill="#989D9C"/>
<circle cx="564.3" cy="1384.2" r="1.95" fill="#989D9C"/>
<circle cx="564.3" cy="1392.2" r="1.95" fill="#989D9C"/>
<text x="592.4" y="1395.7" text-anchor="middle" font-family="Liberation Serif,serif" font-weight="700" font-size="33" fill="#1C2D38" stroke="#1C2D38" stroke-width="1.5" stroke-linejoin="miter">A</text>
<g fill="#8A9090"><path d="M951.6 1373.6h20.8v3h-20.8z"/><path d="M957.1 1373.6v-0.9q0 -1 1 -1h7.7q1 0 1 1v0.9z"/><path d="M952.0 1378.7h20l-3.5 15q-0.45 1.8 -2.3 1.8h-8.4q-1.85 0 -2.3 -1.8z"/></g>
<text x="1592" y="234.4" text-anchor="middle" font-family="Liberation Serif,serif" font-weight="700" font-size="22" fill="#1C2D38" stroke="#1C2D38" stroke-width="0.7">i</text>
<circle cx="3358.5" cy="226.3" r="3" fill="#001E2B"/>
<circle cx="3367.5" cy="226.3" r="3" fill="#001E2B"/>
<circle cx="3376.5" cy="226.3" r="3" fill="#001E2B"/>
<g fill="none" stroke-width="4"><path d="M1441.0 420V1798.7" stroke="#d9d9d9" stroke-width="2"/><path d="M1609.0 420V1798.7" stroke="#d9d9d9" stroke-width="2"/><path d="M1777.0 420V1798.7" stroke="#d9d9d9" stroke-width="2"/><path d="M1943.0 420V1798.7" stroke="#d9d9d9" stroke-width="2"/><path d="M2111.0 420V1798.7" stroke="#d9d9d9" stroke-width="2"/><path d="M2279.0 420V1798.7" stroke="#d9d9d9" stroke-width="2"/><path d="M2445.0 420V1798.7" stroke="#d9d9d9" stroke-width="2"/><path d="M2613.0 420V1798.7" stroke="#d9d9d9" stroke-width="2"/><path d="M2779.0 420V1798.7" stroke="#d9d9d9" stroke-width="2"/><path d="M2947.0 420V1798.7" stroke="#d9d9d9" stroke-width="2"/><path d="M3115.0 420V1798.7" stroke="#d9d9d9" stroke-width="2"/><path d="M1277.5 1701.0H3262.6" stroke="#d9d9d9" stroke-width="2"/><path d="M1277.5 1561.0H3262.6" stroke="#d9d9d9" stroke-width="2"/><path d="M1277.5 1421.0H3262.6" stroke="#d9d9d9" stroke-width="2"/><path d="M1277.5 1281.0H3262.6" stroke="#d9d9d9" stroke-width="2"/><path d="M1277.5 1143.0H3262.6" stroke="#d9d9d9" stroke-width="2"/><path d="M1277.5 1003.0H3262.6" stroke="#d9d9d9" stroke-width="2"/><path d="M1277.5 863.0H3262.6" stroke="#d9d9d9" stroke-width="2"/><path d="M1277.5 725.0H3262.6" stroke="#d9d9d9" stroke-width="2"/><path d="M1277.5 585.0H3262.6" stroke="#d9d9d9" stroke-width="2"/><path d="M1277.5 446.0H3262.6" stroke="#d9d9d9" stroke-width="2"/><circle cx="2511.1" cy="515.1" r="10" stroke="#E01E62"/><circle cx="2444.2" cy="626.5" r="10" stroke="#E5A81A"/><circle cx="2477.6" cy="779.8" r="10" stroke="#E5A81A"/><circle cx="2611.4" cy="703.1" r="10" stroke="#E01E62"/><circle cx="2511.1" cy="821.6" r="10" stroke="#E01E62"/><circle cx="2644.8" cy="856.4" r="10" stroke="#E01E62"/><circle cx="2845.5" cy="856.4" r="10" stroke="#E01E62"/><circle cx="2578.0" cy="898.2" r="10" stroke="#E01E62"/><circle cx="2544.5" cy="967.9" r="10" stroke="#1A6BE6"/><circle cx="2477.6" cy="988.7" r="10" stroke="#E01E62"/><circle cx="2076.4" cy="905.2" r="10" stroke="#E5A81A"/><circle cx="2243.6" cy="1086.3" r="10" stroke="#E01E62"/><circle cx="2343.9" cy="1086.3" r="10" stroke="#E01E62"/><circle cx="2343.9" cy="1107.2" r="10" stroke="#E5A81A"/><circle cx="2444.2" cy="1030.5" r="10" stroke="#E01E62"/><circle cx="2444.2" cy="1065.4" r="10" stroke="#E01E62"/><circle cx="2544.5" cy="1051.4" r="10" stroke="#E01E62"/><circle cx="2578.0" cy="1058.4" r="10" stroke="#E5A81A"/><circle cx="2611.4" cy="1058.4" r="10" stroke="#E01E62"/><circle cx="2778.6" cy="1037.5" r="10" stroke="#E5A81A"/><circle cx="2778.6" cy="1044.5" r="10" stroke="#E5A81A"/><circle cx="2544.5" cy="1086.3" r="10" stroke="#E01E62"/><circle cx="2644.8" cy="1086.3" r="10" stroke="#E01E62"/><circle cx="2578.0" cy="1100.2" r="10" stroke="#E01E62"/><circle cx="2544.5" cy="1107.2" r="10" stroke="#E5A81A"/><circle cx="2644.8" cy="1107.2" r="10" stroke="#E01E62"/><circle cx="2511.1" cy="1128.1" r="10" stroke="#E01E62"/><circle cx="2477.6" cy="1162.9" r="10" stroke="#E01E62"/><circle cx="2477.6" cy="1169.9" r="10" stroke="#E01E62"/><circle cx="2511.1" cy="1204.7" r="10" stroke="#E5A81A"/><circle cx="2410.8" cy="1225.6" r="10" stroke="#1A6BE6"/><circle cx="2444.2" cy="1239.5" r="10" stroke="#E01E62"/><circle cx="2444.2" cy="1246.5" r="10" stroke="#E01E62"/><circle cx="2644.8" cy="1232.6" r="10" stroke="#E5A81A"/><circle cx="2644.8" cy="1239.5" r="10" stroke="#E5A81A"/><circle cx="2578.0" cy="1274.4" r="10" stroke="#E01E62"/><circle cx="2611.4" cy="1281.3" r="10" stroke="#E5A81A"/><circle cx="2644.8" cy="1288.3" r="10" stroke="#E01E62"/><circle cx="2678.3" cy="1295.3" r="10" stroke="#E01E62"/><circle cx="2143.2" cy="1155.9" r="10" stroke="#E5A81A"/><circle cx="2143.2" cy="1197.7" r="10" stroke="#E5A81A"/><circle cx="2377.3" cy="1183.8" r="10" stroke="#E01E62"/><circle cx="2009.5" cy="1232.6" r="10" stroke="#E01E62"/><circle cx="2243.6" cy="1239.5" r="10" stroke="#E5A81A"/><circle cx="2109.8" cy="1281.3" r="10" stroke="#E5A81A"/><circle cx="2109.8" cy="1288.3" r="10" stroke="#E5A81A"/><circle cx="2210.1" cy="1281.3" r="10" stroke="#E5A81A"/><circle cx="2377.3" cy="1274.4" r="10" stroke="#E01E62"/><circle cx="2176.7" cy="1323.1" r="10" stroke="#E01E62"/><circle cx="2410.8" cy="1316.2" r="10" stroke="#E01E62"/><circle cx="2310.4" cy="1330.1" r="10" stroke="#E01E62"/><circle cx="2377.3" cy="1337.0" r="10" stroke="#E01E62"/><circle cx="2377.3" cy="1351.0" r="10" stroke="#E01E62"/><circle cx="2243.6" cy="1351.0" r="10" stroke="#E5A81A"/><circle cx="2444.2" cy="1357.9" r="10" stroke="#E5A81A"/><circle cx="2444.2" cy="1378.8" r="10" stroke="#E5A81A"/><circle cx="2343.9" cy="1371.9" r="10" stroke="#E01E62"/><circle cx="2277.0" cy="1385.8" r="10" stroke="#E01E62"/><circle cx="2377.3" cy="1420.6" r="10" stroke="#E5A81A"/><circle cx="2377.3" cy="1413.7" r="10" stroke="#E01E62"/><circle cx="2343.9" cy="1420.6" r="10" stroke="#E01E62"/><circle cx="2410.8" cy="1434.6" r="10" stroke="#E5A81A"/><circle cx="2511.1" cy="1281.3" r="10" stroke="#E5A81A"/><circle cx="2511.1" cy="1288.3" r="10" stroke="#E5A81A"/><circle cx="2511.1" cy="1295.3" r="10" stroke="#E5A81A"/><circle cx="2544.5" cy="1316.2" r="10" stroke="#E01E62"/><circle cx="2611.4" cy="1323.1" r="10" stroke="#E01E62"/><circle cx="2477.6" cy="1330.1" r="10" stroke="#E5A81A"/><circle cx="2578.0" cy="1344.0" r="10" stroke="#E01E62"/><circle cx="2477.6" cy="1371.9" r="10" stroke="#1A6BE6"/><circle cx="2511.1" cy="1364.9" r="10" stroke="#E01E62"/><circle cx="2678.3" cy="1371.9" r="10" stroke="#E5A81A"/><circle cx="2511.1" cy="1399.7" r="10" stroke="#E01E62"/><circle cx="2511.1" cy="1406.7" r="10" stroke="#E01E62"/><circle cx="2745.2" cy="1413.7" r="10" stroke="#1BC45E"/><circle cx="2544.5" cy="1441.5" r="10" stroke="#E01E62"/><circle cx="2578.0" cy="1441.5" r="10" stroke="#E01E62"/><circle cx="2511.1" cy="1455.5" r="10" stroke="#E01E62"/><circle cx="2511.1" cy="1462.4" r="10" stroke="#E5A81A"/><circle cx="2578.0" cy="1462.4" r="10" stroke="#E5A81A"/><circle cx="2511.1" cy="1483.3" r="10" stroke="#E5A81A"/><circle cx="2678.3" cy="1469.4" r="10" stroke="#E5A81A"/><circle cx="2644.8" cy="1476.4" r="10" stroke="#E01E62"/><circle cx="2444.2" cy="1497.3" r="10" stroke="#E01E62"/><circle cx="2477.6" cy="1497.3" r="10" stroke="#E01E62"/><circle cx="2578.0" cy="1504.2" r="10" stroke="#E01E62"/><circle cx="2444.2" cy="1511.2" r="10" stroke="#E5A81A"/><circle cx="2477.6" cy="1518.2" r="10" stroke="#E5A81A"/><circle cx="2644.8" cy="1518.2" r="10" stroke="#E01E62"/><circle cx="2611.4" cy="1525.1" r="10" stroke="#1BC45E"/><circle cx="2544.5" cy="1532.1" r="10" stroke="#E5A81A"/><circle cx="2578.0" cy="1532.1" r="10" stroke="#E5A81A"/><circle cx="2444.2" cy="1532.1" r="10" stroke="#E5A81A"/><circle cx="2444.2" cy="1539.1" r="10" stroke="#E5A81A"/><circle cx="2410.8" cy="1539.1" r="10" stroke="#E01E62"/><circle cx="2410.8" cy="1560.0" r="10" stroke="#E01E62"/><circle cx="2477.6" cy="1560.0" r="10" stroke="#E01E62"/><circle cx="2477.6" cy="1546.0" r="10" stroke="#E5A81A"/><circle cx="2678.3" cy="1546.0" r="10" stroke="#E01E62"/><circle cx="2678.3" cy="1566.9" r="10" stroke="#1A6BE6"/><circle cx="2578.0" cy="1573.9" r="10" stroke="#1A6BE6"/><circle cx="2477.6" cy="1587.8" r="10" stroke="#1A6BE6"/><circle cx="2410.8" cy="1587.8" r="10" stroke="#E01E62"/><circle cx="2511.1" cy="1594.8" r="10" stroke="#E01E62"/><circle cx="2377.3" cy="1441.5" r="10" stroke="#E01E62"/><circle cx="2143.2" cy="1448.5" r="10" stroke="#E5A81A"/><circle cx="2143.2" cy="1441.5" r="10" stroke="#E01E62"/><circle cx="2042.9" cy="1448.5" r="10" stroke="#E5A81A"/><circle cx="2009.5" cy="1476.4" r="10" stroke="#E01E62"/><circle cx="2109.8" cy="1483.3" r="10" stroke="#E5A81A"/><circle cx="2076.4" cy="1497.3" r="10" stroke="#E5A81A"/><circle cx="2176.7" cy="1490.3" r="10" stroke="#E5A81A"/><circle cx="2210.1" cy="1497.3" r="10" stroke="#E01E62"/><circle cx="2243.6" cy="1497.3" r="10" stroke="#1A6BE6"/><circle cx="2310.4" cy="1483.3" r="10" stroke="#E5A81A"/><circle cx="2343.9" cy="1490.3" r="10" stroke="#E5A81A"/><circle cx="2377.3" cy="1504.2" r="10" stroke="#E01E62"/><circle cx="2377.3" cy="1511.2" r="10" stroke="#E01E62"/><circle cx="1976.0" cy="1525.1" r="10" stroke="#E01E62"/><circle cx="2109.8" cy="1525.1" r="10" stroke="#E5A81A"/><circle cx="2176.7" cy="1525.1" r="10" stroke="#E01E62"/><circle cx="2243.6" cy="1525.1" r="10" stroke="#E01E62"/><circle cx="2310.4" cy="1511.2" r="10" stroke="#E01E62"/><circle cx="2277.0" cy="1532.1" r="10" stroke="#E01E62"/><circle cx="2277.0" cy="1539.1" r="10" stroke="#E01E62"/><circle cx="2310.4" cy="1539.1" r="10" stroke="#E01E62"/><circle cx="2343.9" cy="1532.1" r="10" stroke="#E01E62"/><circle cx="2377.3" cy="1539.1" r="10" stroke="#E01E62"/><circle cx="1976.0" cy="1560.0" r="10" stroke="#E5A81A"/><circle cx="1976.0" cy="1573.9" r="10" stroke="#E5A81A"/><circle cx="2377.3" cy="1560.0" r="10" stroke="#E01E62"/><circle cx="2143.2" cy="1566.9" r="10" stroke="#1A6BE6"/><circle cx="2210.1" cy="1566.9" r="10" stroke="#E5A81A"/><circle cx="2176.7" cy="1573.9" r="10" stroke="#E5A81A"/><circle cx="2310.4" cy="1573.9" r="10" stroke="#E01E62"/><circle cx="2343.9" cy="1580.9" r="10" stroke="#E01E62"/><circle cx="2143.2" cy="1587.8" r="10" stroke="#E01E62"/><circle cx="1708.5" cy="1532.1" r="10" stroke="#E5A81A"/><circle cx="1675.1" cy="1560.0" r="10" stroke="#1A6BE6"/><circle cx="1708.5" cy="1622.7" r="10" stroke="#E5A81A"/><circle cx="1474.4" cy="1650.5" r="10" stroke="#E5A81A"/><circle cx="1307.2" cy="1685.3" r="10" stroke="#E5A81A"/><circle cx="1407.6" cy="1706.2" r="10" stroke="#E5A81A"/><circle cx="1742.0" cy="1678.4" r="10" stroke="#1A6BE6"/><circle cx="1675.1" cy="1699.3" r="10" stroke="#E5A81A"/><circle cx="1608.2" cy="1713.2" r="10" stroke="#E5A81A"/><circle cx="1808.8" cy="1720.2" r="10" stroke="#E01E62"/><circle cx="1842.3" cy="1713.2" r="10" stroke="#E5A81A"/><circle cx="1641.6" cy="1741.1" r="10" stroke="#1A6BE6"/><circle cx="1574.8" cy="1748.0" r="10" stroke="#E5A81A"/><circle cx="1507.9" cy="1755.0" r="10" stroke="#E5A81A"/><circle cx="1441.0" cy="1762.0" r="10" stroke="#E5A81A"/><circle cx="1474.4" cy="1768.9" r="10" stroke="#E5A81A"/><circle cx="1641.6" cy="1762.0" r="10" stroke="#E5A81A"/><circle cx="1742.0" cy="1768.9" r="10" stroke="#E5A81A"/><circle cx="1775.4" cy="1762.0" r="10" stroke="#E5A81A"/><circle cx="1842.3" cy="1762.0" r="10" stroke="#E5A81A"/><circle cx="1875.7" cy="1671.4" r="10" stroke="#E01E62"/><circle cx="1875.7" cy="1720.2" r="10" stroke="#E01E62"/><circle cx="1875.7" cy="1727.1" r="10" stroke="#E5A81A"/><circle cx="1875.7" cy="1755.0" r="10" stroke="#E5A81A"/><circle cx="1909.2" cy="1636.6" r="10" stroke="#E01E62"/><circle cx="1909.2" cy="1671.4" r="10" stroke="#E01E62"/><circle cx="1909.2" cy="1678.4" r="10" stroke="#E01E62"/><circle cx="1909.2" cy="1685.3" r="10" stroke="#E01E62"/><circle cx="1942.6" cy="1636.6" r="10" stroke="#E01E62"/><circle cx="1942.6" cy="1699.3" r="10" stroke="#E5A81A"/><circle cx="1942.6" cy="1706.2" r="10" stroke="#1A6BE6"/><circle cx="1976.0" cy="1615.7" r="10" stroke="#1A6BE6"/><circle cx="1976.0" cy="1608.7" r="10" stroke="#E01E62"/><circle cx="1976.0" cy="1643.6" r="10" stroke="#E5A81A"/><circle cx="1976.0" cy="1650.5" r="10" stroke="#E01E62"/><circle cx="1976.0" cy="1657.5" r="10" stroke="#1A6BE6"/><circle cx="1976.0" cy="1671.4" r="10" stroke="#E5A81A"/><circle cx="2009.5" cy="1699.3" r="10" stroke="#E01E62"/><circle cx="2009.5" cy="1720.2" r="10" stroke="#E5A81A"/><circle cx="2042.9" cy="1650.5" r="10" stroke="#1BC45E"/><circle cx="2042.9" cy="1692.3" r="10" stroke="#1A6BE6"/><circle cx="2042.9" cy="1713.2" r="10" stroke="#E5A81A"/><circle cx="2109.8" cy="1622.7" r="10" stroke="#1A6BE6"/><circle cx="2109.8" cy="1629.6" r="10" stroke="#1A6BE6"/><circle cx="2109.8" cy="1650.5" r="10" stroke="#E5A81A"/><circle cx="2109.8" cy="1713.2" r="10" stroke="#E01E62"/><circle cx="2143.2" cy="1629.6" r="10" stroke="#E5A81A"/><circle cx="2143.2" cy="1650.5" r="10" stroke="#E01E62"/><circle cx="2076.4" cy="1706.2" r="10" stroke="#1A6BE6"/><circle cx="2076.4" cy="1692.3" r="10" stroke="#E5A81A"/><circle cx="2076.4" cy="1685.3" r="10" stroke="#E5A81A"/><circle cx="2076.4" cy="1671.4" r="10" stroke="#1A6BE6"/><circle cx="2076.4" cy="1678.4" r="10" stroke="#1A6BE6"/><circle cx="2143.2" cy="1727.1" r="10" stroke="#E01E62"/><circle cx="2143.2" cy="1734.1" r="10" stroke="#E5A81A"/><circle cx="2176.7" cy="1650.5" r="10" stroke="#E5A81A"/><circle cx="2176.7" cy="1657.5" r="10" stroke="#E5A81A"/><circle cx="2176.7" cy="1664.4" r="10" stroke="#E5A81A"/><circle cx="2176.7" cy="1685.3" r="10" stroke="#E01E62"/><circle cx="2176.7" cy="1678.4" r="10" stroke="#1A6BE6"/><circle cx="2176.7" cy="1699.3" r="10" stroke="#E5A81A"/><circle cx="2176.7" cy="1706.2" r="10" stroke="#E5A81A"/><circle cx="2176.7" cy="1727.1" r="10" stroke="#1A6BE6"/><circle cx="2176.7" cy="1713.2" r="10" stroke="#E5A81A"/><circle cx="2210.1" cy="1643.6" r="10" stroke="#E01E62"/><circle cx="2210.1" cy="1664.4" r="10" stroke="#1A6BE6"/><circle cx="2210.1" cy="1678.4" r="10" stroke="#E01E62"/><circle cx="2210.1" cy="1692.3" r="10" stroke="#1A6BE6"/><circle cx="2210.1" cy="1706.2" r="10" stroke="#E01E62"/><circle cx="2243.6" cy="1601.8" r="10" stroke="#E01E62"/><circle cx="2243.6" cy="1629.6" r="10" stroke="#E01E62"/><circle cx="2243.6" cy="1643.6" r="10" stroke="#E01E62"/><circle cx="2243.6" cy="1664.4" r="10" stroke="#E01E62"/><circle cx="2243.6" cy="1678.4" r="10" stroke="#E01E62"/><circle cx="2243.6" cy="1685.3" r="10" stroke="#E01E62"/><circle cx="2243.6" cy="1692.3" r="10" stroke="#E01E62"/><circle cx="2243.6" cy="1699.3" r="10" stroke="#E01E62"/><circle cx="2243.6" cy="1727.1" r="10" stroke="#1BC45E"/><circle cx="2243.6" cy="1720.2" r="10" stroke="#E01E62"/><circle cx="2243.6" cy="1713.2" r="10" stroke="#E5A81A"/><circle cx="2277.0" cy="1629.6" r="10" stroke="#E01E62"/><circle cx="2277.0" cy="1615.7" r="10" stroke="#E01E62"/><circle cx="2277.0" cy="1608.7" r="10" stroke="#E01E62"/><circle cx="2277.0" cy="1601.8" r="10" stroke="#E5A81A"/><circle cx="2277.0" cy="1657.5" r="10" stroke="#E5A81A"/><circle cx="2277.0" cy="1664.4" r="10" stroke="#E01E62"/><circle cx="2277.0" cy="1678.4" r="10" stroke="#E01E62"/><circle cx="2277.0" cy="1692.3" r="10" stroke="#E01E62"/><circle cx="2277.0" cy="1706.2" r="10" stroke="#E01E62"/><circle cx="2277.0" cy="1713.2" r="10" stroke="#E5A81A"/><circle cx="2277.0" cy="1727.1" r="10" stroke="#E5A81A"/><circle cx="2277.0" cy="1741.1" r="10" stroke="#E01E62"/><circle cx="2310.4" cy="1608.7" r="10" stroke="#E01E62"/><circle cx="2310.4" cy="1622.7" r="10" stroke="#E01E62"/><circle cx="2310.4" cy="1629.6" r="10" stroke="#E01E62"/><circle cx="2310.4" cy="1657.5" r="10" stroke="#E5A81A"/><circle cx="2310.4" cy="1685.3" r="10" stroke="#E5A81A"/><circle cx="2310.4" cy="1699.3" r="10" stroke="#E01E62"/><circle cx="2310.4" cy="1713.2" r="10" stroke="#1A6BE6"/><circle cx="2310.4" cy="1720.2" r="10" stroke="#E5A81A"/><circle cx="2343.9" cy="1608.7" r="10" stroke="#1A6BE6"/><circle cx="2343.9" cy="1657.5" r="10" stroke="#E5A81A"/><circle cx="2343.9" cy="1678.4" r="10" stroke="#E01E62"/><circle cx="2343.9" cy="1692.3" r="10" stroke="#1A6BE6"/><circle cx="2343.9" cy="1699.3" r="10" stroke="#1A6BE6"/><circle cx="2343.9" cy="1720.2" r="10" stroke="#E01E62"/><circle cx="2343.9" cy="1734.1" r="10" stroke="#1A6BE6"/><circle cx="2377.3" cy="1622.7" r="10" stroke="#E5A81A"/><circle cx="2377.3" cy="1692.3" r="10" stroke="#E01E62"/><circle cx="2377.3" cy="1706.2" r="10" stroke="#E01E62"/><circle cx="2377.3" cy="1720.2" r="10" stroke="#E01E62"/><circle cx="2410.8" cy="1601.8" r="10" stroke="#E01E62"/><circle cx="2410.8" cy="1622.7" r="10" stroke="#1A6BE6"/><circle cx="2410.8" cy="1636.6" r="10" stroke="#E01E62"/><circle cx="2410.8" cy="1692.3" r="10" stroke="#E5A81A"/><circle cx="2410.8" cy="1713.2" r="10" stroke="#E5A81A"/><circle cx="2410.8" cy="1706.2" r="10" stroke="#1A6BE6"/><circle cx="2410.8" cy="1720.2" r="10" stroke="#1A6BE6"/><circle cx="2410.8" cy="1734.1" r="10" stroke="#1A6BE6"/><circle cx="2444.2" cy="1629.6" r="10" stroke="#E01E62"/><circle cx="2444.2" cy="1636.6" r="10" stroke="#E01E62"/><circle cx="2444.2" cy="1664.4" r="10" stroke="#E01E62"/><circle cx="2444.2" cy="1671.4" r="10" stroke="#E01E62"/><circle cx="2444.2" cy="1699.3" r="10" stroke="#E01E62"/><circle cx="2444.2" cy="1706.2" r="10" stroke="#1A6BE6"/><circle cx="2444.2" cy="1734.1" r="10" stroke="#E01E62"/><circle cx="2444.2" cy="1741.1" r="10" stroke="#1BC45E"/><circle cx="1976.0" cy="1713.2" r="10" stroke="#1A6BE6"/><circle cx="1976.0" cy="1768.9" r="10" stroke="#E5A81A"/><circle cx="2009.5" cy="1734.1" r="10" stroke="#E5A81A"/><circle cx="2042.9" cy="1734.1" r="10" stroke="#1A6BE6"/><circle cx="2076.4" cy="1727.1" r="10" stroke="#E01E62"/><circle cx="2076.4" cy="1741.1" r="10" stroke="#E01E62"/><circle cx="2076.4" cy="1748.0" r="10" stroke="#E01E62"/><circle cx="2076.4" cy="1755.0" r="10" stroke="#E01E62"/><circle cx="2076.4" cy="1762.0" r="10" stroke="#E01E62"/><circle cx="2076.4" cy="1768.9" r="10" stroke="#E01E62"/><circle cx="2109.8" cy="1741.1" r="10" stroke="#E01E62"/><circle cx="2109.8" cy="1755.0" r="10" stroke="#E01E62"/><circle cx="2109.8" cy="1762.0" r="10" stroke="#E01E62"/><circle cx="2143.2" cy="1748.0" r="10" stroke="#E5A81A"/><circle cx="2176.7" cy="1748.0" r="10" stroke="#E01E62"/><circle cx="2176.7" cy="1755.0" r="10" stroke="#1A6BE6"/><circle cx="2176.7" cy="1755.0" r="10" stroke="#E01E62"/><circle cx="2176.7" cy="1762.0" r="10" stroke="#1A6BE6"/><circle cx="2210.1" cy="1755.0" r="10" stroke="#E01E62"/><circle cx="2210.1" cy="1762.0" r="10" stroke="#E01E62"/><circle cx="2210.1" cy="1768.9" r="10" stroke="#E01E62"/><circle cx="2243.6" cy="1734.1" r="10" stroke="#E5A81A"/><circle cx="2243.6" cy="1741.1" r="10" stroke="#E5A81A"/><circle cx="2243.6" cy="1748.0" r="10" stroke="#E01E62"/><circle cx="2243.6" cy="1748.0" r="10" stroke="#E5A81A"/><circle cx="2243.6" cy="1762.0" r="10" stroke="#E01E62"/><circle cx="2310.4" cy="1748.0" r="10" stroke="#E01E62"/><circle cx="2310.4" cy="1768.9" r="10" stroke="#E01E62"/><circle cx="2343.9" cy="1762.0" r="10" stroke="#E5A81A"/><circle cx="2343.9" cy="1768.9" r="10" stroke="#E5A81A"/><circle cx="2377.3" cy="1748.0" r="10" stroke="#1A6BE6"/><circle cx="2377.3" cy="1755.0" r="10" stroke="#E01E62"/><circle cx="2377.3" cy="1762.0" r="10" stroke="#E01E62"/><circle cx="2377.3" cy="1768.9" r="10" stroke="#E01E62"/><circle cx="2410.8" cy="1768.9" r="10" stroke="#E01E62"/><circle cx="2444.2" cy="1762.0" r="10" stroke="#E5A81A"/><circle cx="2477.6" cy="1629.6" r="10" stroke="#E01E62"/><circle cx="2477.6" cy="1643.6" r="10" stroke="#E5A81A"/><circle cx="2477.6" cy="1678.4" r="10" stroke="#E5A81A"/><circle cx="2477.6" cy="1713.2" r="10" stroke="#E01E62"/><circle cx="2477.6" cy="1720.2" r="10" stroke="#E01E62"/><circle cx="2477.6" cy="1748.0" r="10" stroke="#E01E62"/><circle cx="2511.1" cy="1671.4" r="10" stroke="#E01E62"/><circle cx="2511.1" cy="1699.3" r="10" stroke="#E5A81A"/><circle cx="2511.1" cy="1713.2" r="10" stroke="#1A6BE6"/><circle cx="2544.5" cy="1671.4" r="10" stroke="#E5A81A"/><circle cx="2544.5" cy="1706.2" r="10" stroke="#E01E62"/><circle cx="2544.5" cy="1720.2" r="10" stroke="#E01E62"/><circle cx="2544.5" cy="1727.1" r="10" stroke="#E01E62"/><circle cx="2578.0" cy="1608.7" r="10" stroke="#E01E62"/><circle cx="2578.0" cy="1636.6" r="10" stroke="#E5A81A"/><circle cx="2578.0" cy="1692.3" r="10" stroke="#E01E62"/><circle cx="2611.4" cy="1685.3" r="10" stroke="#E01E62"/><circle cx="2644.8" cy="1685.3" r="10" stroke="#E01E62"/><circle cx="2678.3" cy="1629.6" r="10" stroke="#1BC45E"/><circle cx="2678.3" cy="1650.5" r="10" stroke="#E01E62"/><circle cx="2711.7" cy="1748.0" r="10" stroke="#1A6BE6"/><circle cx="2745.2" cy="1748.0" r="10" stroke="#E01E62"/><circle cx="2477.6" cy="1762.0" r="10" stroke="#E01E62"/><circle cx="2477.6" cy="1768.9" r="10" stroke="#1BC45E"/><circle cx="2511.1" cy="1762.0" r="10" stroke="#1A6BE6"/><circle cx="2511.1" cy="1768.9" r="10" stroke="#E5A81A"/><circle cx="2544.5" cy="1768.9" r="10" stroke="#1A6BE6"/><circle cx="2611.4" cy="1768.9" r="10" stroke="#E01E62"/><circle cx="2644.8" cy="1762.0" r="10" stroke="#E5A81A"/><circle cx="3113.0" cy="1566.9" r="10" stroke="#E01E62"/><circle cx="2778.6" cy="1650.5" r="10" stroke="#E01E62"/><circle cx="2745.2" cy="1768.9" r="10" stroke="#E5A81A"/></g>
<g font-family="Liberation Sans,sans-serif" font-size="22" fill="#000"><path d="M1277.5 420V1798.7H3262.6" stroke="#888" stroke-width="2" fill="none"/><path d="M1441.0 1798.7v10" stroke="#888" stroke-width="2"/><text x="1441.0" y="1830.7" text-anchor="middle" textLength="13.3" lengthAdjust="spacingAndGlyphs">5</text><path d="M1609.0 1798.7v10" stroke="#888" stroke-width="2"/><text x="1609.0" y="1830.7" text-anchor="middle" textLength="32.1" lengthAdjust="spacingAndGlyphs">5.5</text><path d="M1777.0 1798.7v10" stroke="#888" stroke-width="2"/><text x="1777.0" y="1830.7" text-anchor="middle" textLength="13.3" lengthAdjust="spacingAndGlyphs">6</text><path d="M1943.0 1798.7v10" stroke="#888" stroke-width="2"/><text x="1943.0" y="1830.7" text-anchor="middle" textLength="32.1" lengthAdjust="spacingAndGlyphs">6.5</text><path d="M2111.0 1798.7v10" stroke="#888" stroke-width="2"/><text x="2111.0" y="1830.7" text-anchor="middle" textLength="13.3" lengthAdjust="spacingAndGlyphs">7</text><path d="M2279.0 1798.7v10" stroke="#888" stroke-width="2"/><text x="2279.0" y="1830.7" text-anchor="middle" textLength="32.1" lengthAdjust="spacingAndGlyphs">7.5</text><path d="M2445.0 1798.7v10" stroke="#888" stroke-width="2"/><text x="2445.0" y="1830.7" text-anchor="middle" textLength="13.3" lengthAdjust="spacingAndGlyphs">8</text><path d="M2613.0 1798.7v10" stroke="#888" stroke-width="2"/><text x="2613.0" y="1830.7" text-anchor="middle" textLength="32.1" lengthAdjust="spacingAndGlyphs">8.5</text><path d="M2779.0 1798.7v10" stroke="#888" stroke-width="2"/><text x="2779.0" y="1830.7" text-anchor="middle" textLength="13.3" lengthAdjust="spacingAndGlyphs">9</text><path d="M2947.0 1798.7v10" stroke="#888" stroke-width="2"/><text x="2947.0" y="1830.7" text-anchor="middle" textLength="32.1" lengthAdjust="spacingAndGlyphs">9.5</text><path d="M3115.0 1798.7v10" stroke="#888" stroke-width="2"/><text x="3115.0" y="1830.7" text-anchor="middle" textLength="23.5" lengthAdjust="spacingAndGlyphs">10</text><path d="M1277.5 1701.0h-10.5" stroke="#888" stroke-width="2"/><text x="1262.5" y="1710.0" text-anchor="end" textLength="26.9" lengthAdjust="spacingAndGlyphs">40</text><path d="M1277.5 1561.0h-10.5" stroke="#888" stroke-width="2"/><text x="1262.5" y="1570.0" text-anchor="end" textLength="26.9" lengthAdjust="spacingAndGlyphs">60</text><path d="M1277.5 1421.0h-10.5" stroke="#888" stroke-width="2"/><text x="1262.5" y="1430.0" text-anchor="end" textLength="26.9" lengthAdjust="spacingAndGlyphs">80</text><path d="M1277.5 1281.0h-10.5" stroke="#888" stroke-width="2"/><text x="1262.5" y="1290.0" text-anchor="end" textLength="40.4" lengthAdjust="spacingAndGlyphs">100</text><path d="M1277.5 1143.0h-10.5" stroke="#888" stroke-width="2"/><text x="1262.5" y="1152.0" text-anchor="end" textLength="40.4" lengthAdjust="spacingAndGlyphs">120</text><path d="M1277.5 1003.0h-10.5" stroke="#888" stroke-width="2"/><text x="1262.5" y="1012.0" text-anchor="end" textLength="40.4" lengthAdjust="spacingAndGlyphs">140</text><path d="M1277.5 863.0h-10.5" stroke="#888" stroke-width="2"/><text x="1262.5" y="872.0" text-anchor="end" textLength="40.4" lengthAdjust="spacingAndGlyphs">160</text><path d="M1277.5 725.0h-10.5" stroke="#888" stroke-width="2"/><text x="1262.5" y="734.0" text-anchor="end" textLength="40.4" lengthAdjust="spacingAndGlyphs">180</text><path d="M1277.5 585.0h-10.5" stroke="#888" stroke-width="2"/><text x="1262.5" y="594.0" text-anchor="end" textLength="40.4" lengthAdjust="spacingAndGlyphs">200</text><path d="M1277.5 446.0h-10.5" stroke="#888" stroke-width="2"/><text x="1262.5" y="455.0" text-anchor="end" textLength="40.4" lengthAdjust="spacingAndGlyphs">220</text></g>
<text x="2269.3" y="1864" text-anchor="middle" font-family="Liberation Sans,sans-serif" font-weight="700" font-size="26" fill="#000" textLength="266" lengthAdjust="spacingAndGlyphs">tomatoes.critic.rating</text>
<text transform="translate(1205.8 1109) rotate(-90)" text-anchor="middle" font-family="Liberation Sans,sans-serif" font-weight="700" font-size="26" fill="#000" textLength="252.5" lengthAdjust="spacingAndGlyphs">awards.nominations</text>
<text x="3298" y="436.5" font-family="Liberation Sans,sans-serif" font-weight="700" font-size="22" fill="#000" textLength="55.4" lengthAdjust="spacingAndGlyphs">rated</text>
<circle cx="3310.8" cy="466" r="10" fill="#1BC45E"/>
<text x="3332.6" y="472.4" font-family="Liberation Sans,sans-serif" font-size="20" fill="#000" textLength="16.5" lengthAdjust="spacingAndGlyphs">G</text>
<circle cx="3310.8" cy="494" r="10" fill="#1A6BE6"/>
<text x="3332.6" y="500.4" font-family="Liberation Sans,sans-serif" font-size="20" fill="#000" textLength="31.8" lengthAdjust="spacingAndGlyphs">PG</text>
<circle cx="3310.8" cy="522" r="10" fill="#E5A81A"/>
<text x="3332.6" y="528.4" font-family="Liberation Sans,sans-serif" font-size="20" fill="#000" textLength="63.6" lengthAdjust="spacingAndGlyphs">PG-13</text>
<circle cx="3310.8" cy="550" r="10" fill="#E01E62"/>
<text x="3332.6" y="556.4" font-family="Liberation Sans,sans-serif" font-size="20" fill="#000" textLength="15.3" lengthAdjust="spacingAndGlyphs">R</text>
<g transform="translate(3368 1845)" fill="none" stroke-linejoin="round"><path d="M-15.900 -21.100h31.400a8 8 0 0 1 8 8v16a8 8 0 0 1 -8 8h-18L-12.600 21.600q-1.600 1.600 -2.200 -0.600L-15.900 10.900a8 8 0 0 1 -8 -8v-16a8 8 0 0 1 8 -8z" stroke="#8FA2AE" stroke-width="1.300"/><circle cx="6.300" cy="-9.400" r="3.500" stroke="#C5CDD1" stroke-width="1.300" fill="#001E2B"/><path d="M1.600 0.900q0.400 -6.500 4.700 -6.500q5.800 0 6.700 6.500z" stroke="#C5CDD1" stroke-width="1.300" fill="#3D4F58"/><circle cx="-4.600" cy="-9.600" r="4" fill="#00ED64"/><path d="M-11.900 1.500q0.500 -7.200 7.300 -7.200t7.300 7.200z" fill="#00ED64"/></g>
</svg>
</body></html>
